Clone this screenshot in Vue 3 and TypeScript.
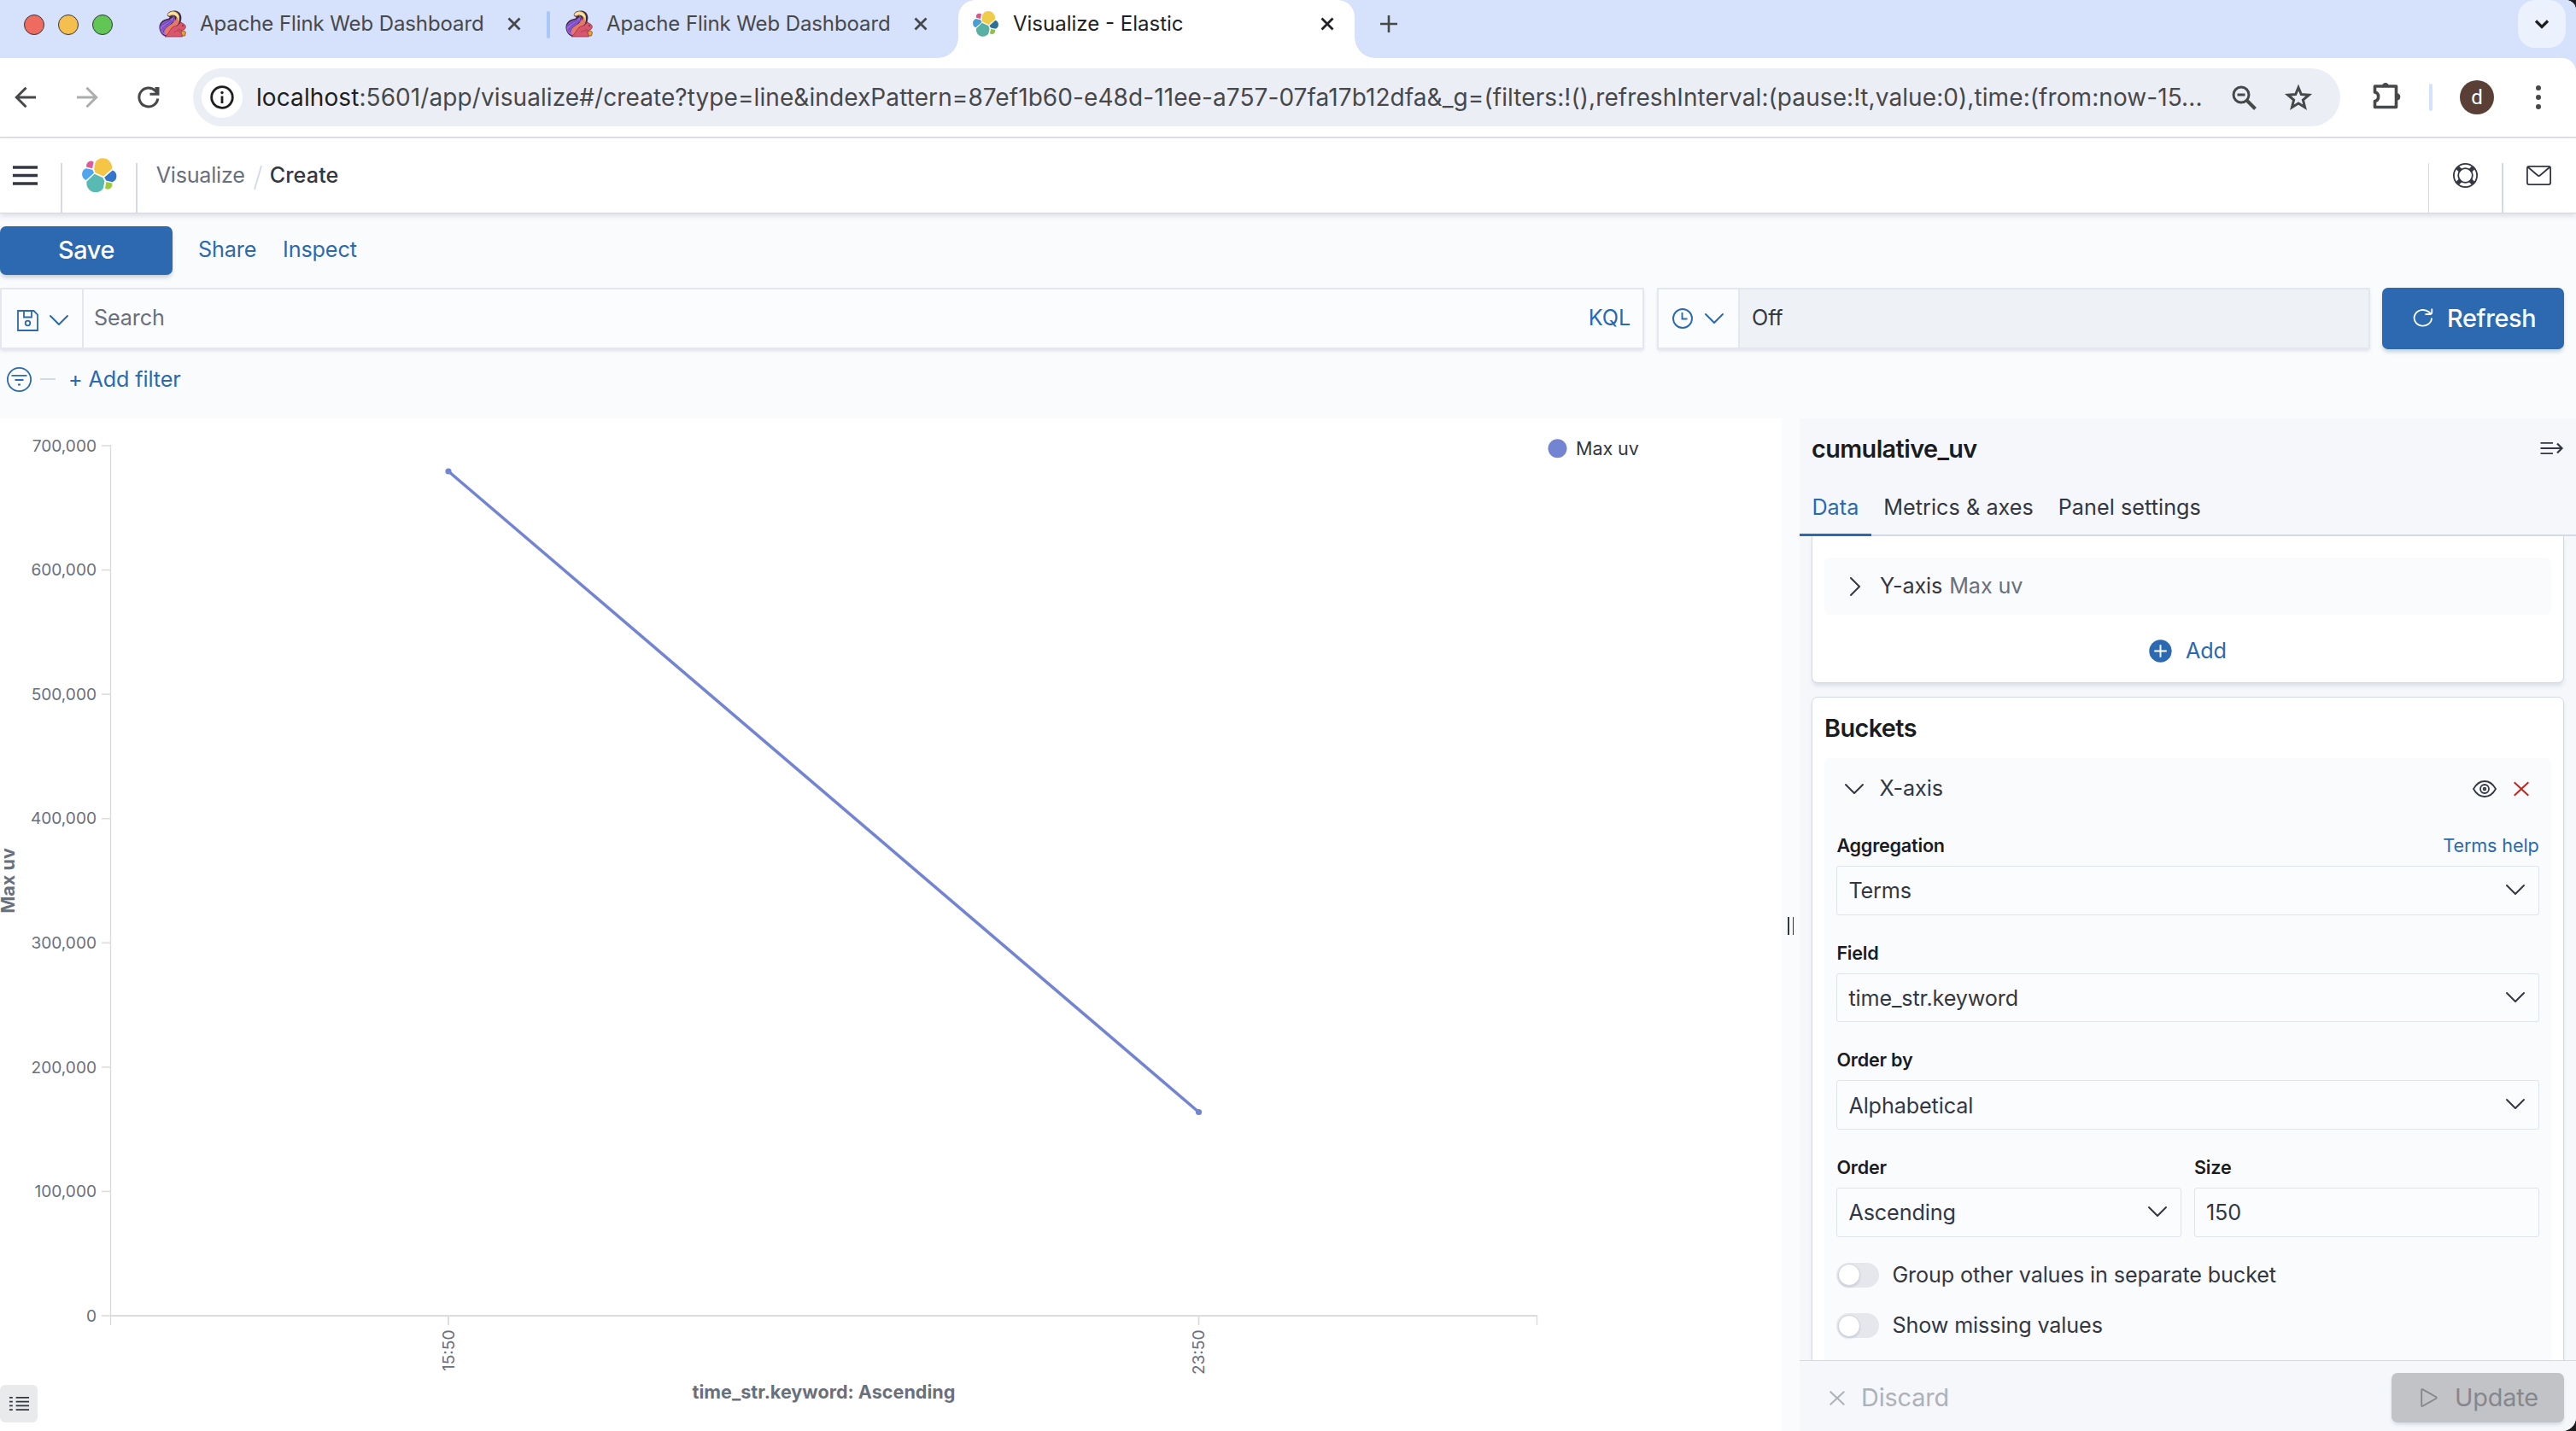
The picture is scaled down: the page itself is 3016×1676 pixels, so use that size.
<script setup lang="ts">
interface BrowserTab {
  title: string
  kind: 'flink' | 'elastic'
}

const flinkTabs: BrowserTab[] = [
  { title: 'Apache Flink Web Dashboard', kind: 'flink' },
  { title: 'Apache Flink Web Dashboard', kind: 'flink' },
]

const logoShapes = [
  'M12.58 13.787l7.002 3.211 7.066-6.213a7.849 7.849 0 0 0 .152-1.557c0-4.287-3.464-7.763-7.736-7.763a7.722 7.722 0 0 0-6.38 3.375L11.508 10.96l1.07 2.827z',
  'M5.333 21.228A8.001 8.001 0 0 0 5.18 22.8c0 4.3 3.473 7.787 7.757 7.787a7.734 7.734 0 0 0 6.406-3.403l1.166-6.102-1.556-2.987-7.03-3.217-6.59 6.35z',
  'M5.288 9.067l4.8 1.137L11.14 4.73A3.812 3.812 0 0 0 8.826 3.95 3.834 3.834 0 0 0 5.004 7.786c0 .441.097.875.284 1.281z',
  'M4.87 10.214a5.294 5.294 0 0 0-3.509 4.996 5.32 5.32 0 0 0 3.398 4.966l6.734-6.104-1.236-2.65-5.387-1.208z',
  'M20.874 27.184a3.807 3.807 0 0 0 2.304.776c2.108 0 3.822-1.72 3.822-3.836 0-.464-.082-.906-.235-1.28l-4.796-1.124-1.095 5.464z',
  'M21.848 20.563l5.28 1.237a5.301 5.301 0 0 0 3.511-5 5.311 5.311 0 0 0-3.401-4.956l-6.905 6.066 1.515 2.653z',
]
const faviconColors = ['#efcd4b', '#5aafa3', '#d7578f', '#4b9fd0', '#8fc04f', '#2f6f97']
const brandColors = ['#f5c646', '#58bab3', '#df5a9a', '#50a5f1', '#9dca3c', '#3474c9']

const axisBottom = 1541
const axisTop = 522
const yTicks = [0, 100000, 200000, 300000, 400000, 500000, 600000, 700000].map((value) => ({
  label: value.toLocaleString('en-US'),
  y: axisBottom - ((axisBottom - axisTop) * value) / 700000,
}))
const xTicks = [
  { label: '15:50', x: 525 },
  { label: '23:50', x: 1403.5 },
]

const selects = [
  { label: 'Aggregation', value: 'Terms', help: 'Terms help' },
  { label: 'Field', value: 'time_str.keyword', help: '' },
  { label: 'Order by', value: 'Alphabetical', help: '' },
]
const toggles = ['Group other values in separate bucket', 'Show missing values']
</script>

<template>
  <div class="window">
    <div class="tabstrip">
      <div class="lights"><i class="red" /><i class="amber" /><i class="green" /></div>
      <template v-for="(tab, i) in flinkTabs" :key="i">
        <div class="tab" :class="'tab-' + i">
          <svg class="flink" viewBox="0 0 32 32">
            <path d="M9 31C4 30 1 26 .5 21C0 16 3 12 8 10.500C11 10 13.500 9 12 7.500C9.500 7.500 9 5 11 3C14 0 20 0 23 2C26 4 27 8 26 12L24 20L20 31Z" fill="#3d2b45" />
            <path d="M2 24C0 18 4 13.500 9 12C15 10.500 17 8 16 6C19 8 20 12 18 16C15 19 13 22 15 29C10 31 4 29 2 24Z" fill="#a565d8" />
            <path d="M7 27C7 21 12 18 16 15C20 12 22 9 20 4C25 7 25 13 22 17C18 20 14 23 14 29C11 30 8 29 7 27Z" fill="#e8785f" />
            <path d="M1.500 19C5 15 10 14 14 11M3 24C6 17 13 16 16 12" stroke="#6e4bc8" stroke-width="1.6" fill="none" />
            <path d="M5 26C6 20 12 18 17 14M16 7C19 11 17 14 14 16" stroke="#3d2b45" stroke-width=".7" fill="none" />
            <path d="M10 6C11 2 16 0 20 2C24 4 25 9 23 13C22 8 19 5 15 6C13 7 12 7 10 6Z" fill="#f5c66a" />
            <path d="M11 5C15 2 20 3 23 8" stroke="#fff0c0" stroke-width="1.4" fill="none" />
            <path d="M7 31C11 29 12 24 16 20C19 18 22 19 24 15.500L26 14L28 15.500C31 16.500 32 19 31 21C30 23 28 23 27 24L27.500 31Z" fill="#d9566c" stroke="#7c2f45" stroke-width=".7" />
            <path d="M18 26C20 23 24 23 25 26M23 22L27 24" stroke="#a03850" stroke-width=".8" fill="none" />
            <path d="M26 25C28 23.500 31 24 31.500 26L30.500 30H28L26.500 28Z" fill="#eda02f" stroke="#7c3f25" stroke-width=".7" />
            <circle cx="28" cy="18" r=".8" fill="#3a1822" />
          </svg>
          <span class="tab-title">{{ tab.title }}</span>
          <svg class="close" viewBox="0 0 16 16"><path d="M1.500 1.500L14.500 14.500M14.500 1.500L1.500 14.500" /></svg>
        </div>
        <div v-if="i === 0" class="tab-sep" />
      </template>
      <div class="tab active">
        <svg class="fav" viewBox="1.3 1.4 29.4 29.3">
          <path v-for="(d, n) in logoShapes" :key="n" :d="d" :fill="faviconColors[n]" />
        </svg>
        <span class="tab-title">Visualize - Elastic</span>
        <svg class="close" viewBox="0 0 16 16"><path d="M1.500 1.500L14.500 14.500M14.500 1.500L1.500 14.500" /></svg>
      </div>
      <svg class="plus" viewBox="0 0 20 20"><path d="M10 0V20M0 10H20" /></svg>
      <div class="tab-menu"><svg viewBox="0 0 18 12"><path d="M2 2.500L9 9.500L16 2.500" /></svg></div>
    </div>

    <div class="toolbar-wrap">
      <div class="toolbar">
        <svg class="nav back" viewBox="0 0 26 26"><path d="M25 13H2.500M13.500 1.800L2.300 13L13.500 24.200" /></svg>
        <svg class="nav fwd" viewBox="0 0 26 26"><path d="M1 13H23.500M12.500 1.800L23.700 13L12.500 24.200" /></svg>
        <svg class="nav reload" viewBox="0 0 26 26">
          <path d="M23.800 14.500A11 11 0 1 1 21 5.500L23.500 8" /><path d="M14.500 10.800V7.800H20.500V1H25.500V10.800Z" class="solid" />
        </svg>
        <div class="omnibox">
          <div class="info">
            <svg viewBox="0 0 28 28"><circle cx="14" cy="14" r="12.300" /><path d="M14 12.500V21" /><circle cx="14" cy="8.500" r="1.700" class="dot" /></svg>
          </div>
          <span class="url"><b>localhost</b>:5601/app/visualize#/create?type=line&amp;indexPattern=87ef1b60-e48d-11ee-a757-07fa17b12dfa&amp;_g=(filters:!(),refreshInterval:(pause:!t,value:0),time:(from:now-15...</span>
          <svg class="zoom" viewBox="0 0 29 29"><circle cx="11" cy="11" r="9" /><path d="M17.500 17.500L27.500 27.500" stroke-width="4" /><path d="M6.500 11H15.500" /></svg>
          <svg class="star" viewBox="0 0 34 32"><path d="M17 4.500L20.300 12.500L29.300 13.200L22.400 19L24.600 27.700L17 23L9.400 27.700L11.600 19L4.700 13.200L13.700 12.500Z" /></svg>
        </div>
        <svg class="puzzle" viewBox="0 0 34 34">
          <path d="M2.500 6H27.500V30.500H2.500V23.500C8 22.500 8 14 2.500 13Z" />
          <path d="M11 5A4.200 4.200 0 0 1 19 5ZM29 14.300A4.200 4.200 0 0 1 29 22.500Z" class="solid" />
        </svg>
        <div class="bar-sep" />
        <div class="avatar">d</div>
        <svg class="dots" viewBox="0 0 8 30"><circle cx="4" cy="4" r="3" /><circle cx="4" cy="15" r="3" /><circle cx="4" cy="26" r="3" /></svg>
      </div>
    </div>

    <header class="app-header">
      <svg class="burger" viewBox="0 0 29 23"><path d="M0 2H29M0 11.500H29M0 21H29" /></svg>
      <div class="vline v1" />
      <svg class="brand" viewBox="1.3 1.4 29.4 29.3">
        <path v-for="(d, n) in logoShapes" :key="n" :d="d" :fill="brandColors[n]" />
      </svg>
      <div class="vline v2" />
      <span class="crumb">Visualize</span>
      <svg class="slash" viewBox="0 0 10 28"><path d="M9 0L1 28" /></svg>
      <span class="crumb current">Create</span>
      <div class="vline v3" />
      <svg class="help" viewBox="0 0 29 29">
        <circle cx="14.500" cy="14.500" r="13.600" /><circle cx="14.500" cy="14.500" r="8.300" />
        <path d="M5.200 5.200L8.900 8.900M23.800 5.200L20.100 8.900M5.200 23.800L8.900 20.100M23.800 23.800L20.100 20.100" stroke-width="5" />
      </svg>
      <div class="vline v4" />
      <svg class="mail" viewBox="0 0 29 23"><rect x=".9" y=".9" width="27.200" height="21.200" rx="2" /><path d="M1.500 1.500L13.200 11.500Q14.500 12.600 15.800 11.500L27.500 1.500" /></svg>
    </header>

    <div class="actions">
      <button class="btn save">Save</button>
      <a class="share">Share</a>
      <a class="inspect">Inspect</a>
    </div>

    <div class="query">
      <div class="search-box">
        <div class="saved">
          <svg class="floppy" viewBox="0 0 25 25"><path d="M1 1H19.500L24 5.500V24H1ZM8 1V8.500H17V1" /><circle cx="12.500" cy="15.500" r="2.800" /></svg>
          <svg class="chev" viewBox="0 0 22 12"><path d="M1 1L11 11L21 1" /></svg>
        </div>
        <span class="placeholder">Search</span>
        <a class="kql">KQL</a>
      </div>
      <div class="time-box">
        <div class="clock-part">
          <svg class="clock" viewBox="0 0 24 24"><circle cx="12" cy="12" r="11" /><path d="M11.500 5V12.500H17.500" /></svg>
          <svg class="chev" viewBox="0 0 22 12"><path d="M1 1L11 11L21 1" /></svg>
        </div>
        <div class="off"><span>Off</span></div>
      </div>
      <button class="btn refresh">
        <svg viewBox="0 0 24 22"><path d="M22 11.500A10.200 9.300 0 1 1 18.500 4.300L21 6.300M14.500 7H20Q22.300 7 22.300 4.500V.5" /></svg>
        <span>Refresh</span>
      </button>
    </div>

    <div class="filters">
      <svg class="filter-icon" viewBox="0 0 29 29"><circle cx="14.500" cy="14.500" r="13.600" /><path d="M5.500 9.800H23.500M9.500 15H19.500M13 20.500H16" /></svg>
      <i class="dash" />
      <a>+ Add filter</a>
    </div>

    <div class="workspace">
      <div class="chart-pane">
        <svg class="chart" viewBox="0 490 2086 1186">
          <g stroke="#dcdcdc" fill="none">
            <path d="M129.500 521V1552" stroke-width="1.400" />
            <path v-for="t in yTicks" :key="t.label" :d="`M119 ${t.y}H130`" stroke-width="1.600" />
            <path d="M129 1541H1800" stroke-width="2" />
            <path d="M1799.500 1541V1552" stroke-width="1.400" />
            <path v-for="t in xTicks" :key="t.label" :d="`M${t.x} 1541V1552`" stroke-width="1.800" />
          </g>
          <g class="tick-label">
            <text v-for="t in yTicks" :key="t.label" x="113" :y="t.y + 6.700" text-anchor="end">{{ t.label }}</text>
            <text v-for="t in xTicks" :key="t.label" :transform="`translate(${t.x + 6.500} 1557.500) rotate(-90)`" text-anchor="end">{{ t.label }}</text>
          </g>
          <text class="axis-title" x="964.500" y="1638" text-anchor="middle">time_str.keyword: Ascending</text>
          <text class="axis-title" transform="translate(17 1031.500) rotate(-90)" text-anchor="middle">Max uv</text>
          <path d="M525 552L1403.500 1302.500" stroke="#7385d2" stroke-width="3.600" fill="none" />
          <circle cx="525" cy="552" r="3.600" fill="#7385d2" /><circle cx="1403.500" cy="1302.500" r="3.600" fill="#7385d2" />
          <circle cx="1823.500" cy="525.300" r="11" fill="#7385d2" />
          <text class="legend-text" x="1845" y="533">Max uv</text>
        </svg>
        <div class="legend-btn">
          <svg viewBox="0 0 24 18"><path d="M0 1.500H4M8 1.500H24M0 6.500H4M8 6.500H24M0 11.500H4M8 11.500H24M0 16.500H4M8 16.500H24" /></svg>
        </div>
      </div>
      <div class="resizer"><i /><i /></div>

      <aside class="sidebar">
        <div class="side-title">
          <h2>cumulative_uv</h2>
          <svg viewBox="0 0 27 16"><path d="M.5 1.800H15M.5 8H25M.5 14.200H15" /><path d="M20 2.500L25.500 8L20 13.500" stroke-width="2.200" /></svg>
        </div>
        <nav class="side-tabs">
          <a class="on">Data</a><a>Metrics &amp; axes</a><a>Panel settings</a>
        </nav>
        <div class="side-scroll">
          <section class="card card-metrics">
            <div class="agg-row">
              <svg class="caret-right" viewBox="0 0 12 22"><path d="M1 1L11 11L1 21" /></svg>
              <span>Y-axis</span><span class="muted">Max uv</span>
            </div>
            <div class="add">
              <svg viewBox="0 0 28 28"><circle cx="14" cy="14" r="13.700" /><path d="M14 6.500V21.500M6.500 14H21.500" /></svg>
              <a>Add</a>
            </div>
          </section>

          <section class="card card-buckets">
            <h3>Buckets</h3>
            <div class="bucket">
              <div class="bucket-head">
                <svg class="chev dark" viewBox="0 0 22 12"><path d="M1 1L11 11L21 1" /></svg>
                <span>X-axis</span>
                <svg class="eye" viewBox="0 0 28 20"><path d="M1 10Q6 1 14 1T27 10Q22 19 14 19T1 10Z" /><circle cx="14" cy="10" r="5" /><circle cx="14" cy="10" r="1.300" /></svg>
                <svg class="remove" viewBox="0 0 18 17"><path d="M.7.7L17.300 16.300M17.300.7L.7 16.300" /></svg>
              </div>
              <div v-for="s in selects" :key="s.label" class="field">
                <div class="label"><b>{{ s.label }}</b><a v-if="s.help">{{ s.help }}</a></div>
                <div class="control"><span>{{ s.value }}</span><svg class="chev dark" viewBox="0 0 22 12"><path d="M1 1L11 11L21 1" /></svg></div>
              </div>
              <div class="pair">
                <div class="field">
                  <div class="label"><b>Order</b></div>
                  <div class="control"><span>Ascending</span><svg class="chev dark" viewBox="0 0 22 12"><path d="M1 1L11 11L21 1" /></svg></div>
                </div>
                <div class="field">
                  <div class="label"><b>Size</b></div>
                  <div class="control"><span>150</span></div>
                </div>
              </div>
              <div v-for="t in toggles" :key="t" class="toggle"><i /><span>{{ t }}</span></div>
            </div>
          </section>
        </div>
        <footer class="side-foot">
          <svg class="cross" viewBox="0 0 18 17"><path d="M.7.7L17.300 16.300M17.300.7L.7 16.300" /></svg>
          <span class="discard">Discard</span>
          <div class="update">
            <svg viewBox="0 0 20 22"><path d="M1.200 2V20Q1.200 21.500 2.600 20.700L18 12Q19.300 11 18 10L2.600 1.300Q1.200.6 1.200 2Z" /></svg>
            <span>Update</span>
          </div>
        </footer>
      </aside>
    </div>
  </div>
</template>

<style>
body { background: #1c1c1e; }
</style>

<style scoped>
* { box-sizing: border-box; }
.window {
  width: 3016px; height: 1676px; overflow: hidden; display: flex; flex-direction: column;
  background: #fafbfd; border-radius: 0 12px 16px 0; color: #343741;
  font-family: Inter, "Liberation Sans", sans-serif; font-size: 25.2px; line-height: 1.2; letter-spacing: -0.005em;
}
svg { display: block; flex: none; fill: none; overflow: visible; }
a { color: #2b69b0; }
span, a, h2, h3, b { white-space: nowrap; }
h2, h3 { margin: 0; }
i { display: block; flex: none; }

.tabstrip { height: 68px; flex: none; display: flex; align-items: flex-start; background: #d6e1fb; letter-spacing: 0; }
.lights { display: flex; gap: 16px; margin: 17px 0 0 28px; }
.lights i { width: 24px; height: 24px; border-radius: 50%; border: 1px solid; }
.red { background: #ed6b5f; border-color: #d75b50; }
.amber { background: #f5bf4f; border-color: #dca93f; }
.green { background: #62c655; border-color: #51ad45; }
.tab { display: flex; align-items: center; height: 56px; color: #47484a; font-size: 24px; flex: none; }
.tab-0 { margin-left: 54px; width: 454px; }
.tab-1 { margin-left: 18px; width: 460px; }
.tab .flink { width: 32px; height: 32px; margin-right: 16px; }
.tab-title { width: 360px; letter-spacing: -0.1px; }
.close { width: 16px; height: 16px; stroke: #47484a; stroke-width: 2.8; }
.tab-sep { width: 4px; height: 32px; margin-top: 13px; border-radius: 2px; background: #a8c7fa; flex: none; }
.tab.active { position: relative; height: 68px; width: 464px; padding: 0 0 12px 17px; background: #fff; color: #202124; border-radius: 20px 20px 0 0; }
.tab.active::before, .tab.active::after { content: ""; position: absolute; bottom: 0; width: 24px; height: 24px; }
.tab.active::before { left: -24px; background: radial-gradient(circle at 0 0, transparent 23.5px, #fff 24px); }
.tab.active::after { right: -24px; background: radial-gradient(circle at 100% 0, transparent 23.5px, #fff 24px); }
.fav { width: 30px; height: 30px; margin-right: 17px; }
.active .close { stroke: #202124; }
.active .tab-title { letter-spacing: 0; }
.plus { width: 20px; height: 20px; margin: 18px 0 0 30px; stroke: #47484a; stroke-width: 2.6; }
.tab-menu { width: 56px; height: 56px; margin: 0 12px 0 auto; border-radius: 20px; background: #ebf2fd; display: flex; align-items: center; justify-content: center; }
.tab-menu svg { width: 18px; height: 12px; stroke: #1f1f1f; stroke-width: 3.2; }

.toolbar-wrap { background: #d6e1fb; flex: none; }
.toolbar { height: 94px; padding-bottom: 0; border-bottom: 2px solid #e0e1e3; background: #fff; border-radius: 0 16px 0 0; display: flex; align-items: center; }
.nav { width: 26px; height: 26px; stroke: #47484a; stroke-width: 3; }
.back { margin-left: 17px; }
.fwd { margin-left: 46px; stroke: #acadae; }
.reload { margin-left: 46px; }
.solid { fill: #47484a; stroke: none; }
.omnibox { width: 2514px; height: 68px; margin-left: 39px; border-radius: 34px; background: #eceef6; display: flex; align-items: center; letter-spacing: 0; }
.info { width: 48px; height: 48px; margin-left: 10px; border-radius: 50%; background: #fff; display: flex; align-items: center; justify-content: center; }
.info svg { width: 28px; height: 28px; stroke: #1f1f1f; stroke-width: 2.8; }
.info .dot { fill: #1f1f1f; stroke: none; }
.url { margin: 1px 0 0 16px; width: 2313px; font-size: 28px; letter-spacing: 0.085px; color: #47484a; }
.url b { font-weight: 400; color: #1f1f1f; }
.zoom { width: 29px; height: 29px; stroke: #47484a; stroke-width: 3; }
.star { width: 34px; height: 32px; margin-left: 32px; stroke: #47484a; stroke-width: 3; }
.puzzle { width: 34px; height: 34px; margin: -4px 0 0 38px; stroke: #47484a; stroke-width: 3.6; stroke-linejoin: round; }
.bar-sep { width: 4px; height: 32px; border-radius: 2px; background: #d3e3fd; margin-left: 32px; }
.avatar { width: 40px; height: 40px; margin-left: 32px; border-radius: 50%; background: #5a3f37; color: #fff; font: 24px/40px Roboto, sans-serif; text-align: center; }
.dots { width: 8px; height: 30px; margin-left: 48px; fill: #47484a; }

.app-header { position: relative; height: 88px; flex: none; background: #fff; border-bottom: 1.6px solid #d3dae6; box-shadow: 0 3px 6px rgba(152, 162, 179, .32); display: flex; align-items: center; }
.burger { width: 29px; height: 23px; margin-left: 15px; stroke: #343741; stroke-width: 3.6; }
.vline { width: 1.6px; height: 58px; align-self: flex-end; background: #d3dae6; flex: none; }
.v1 { margin-left: 27px; }
.brand { width: 40.500px; height: 40.500px; margin-left: 23px; }
.v2 { margin-left: 23px; }
.crumb { width: 116px; margin-left: 22px; color: #69707d; letter-spacing: -0.25px; }
.crumb.current { margin-left: 9px; color: #343741; font-weight: 500; letter-spacing: 0.1px; }
.slash { width: 10px; height: 28px; margin-left: -2px; margin-top: 4px; stroke: #d3dae6; stroke-width: 1.8; }
.v3 { margin-left: auto; }
.help { width: 29px; height: 29px; margin-left: 28px; stroke: #343741; stroke-width: 1.8; }
.v4 { margin-left: 28px; }
.mail { width: 29px; height: 23px; margin: 0 29px 0 27px; stroke: #343741; stroke-width: 1.8; }

.actions { height: 87px; flex: none; padding-top: 15px; display: flex; align-items: flex-start; }
.btn { border: 0; padding: 0; color: #fff; background: #2c69b0; border-radius: 7px; box-shadow: 0 4px 5px -1px rgba(54, 97, 126, .28); font: 500 28.8px/1.2 Inter, sans-serif; letter-spacing: -0.3px; flex: none; }
.save { width: 202px; height: 57px; }
.share { margin: 12px 0 0 30px; width: 99px; }
.inspect { margin-top: 12px; }

.query { height: 72px; flex: none; display: flex; }
.search-box, .time-box { display: flex; align-items: center; border: 2px solid #e4e7f0; background: #fbfcfd; box-shadow: 0 3px 4px -1px rgba(152, 162, 179, .3); }
.search-box { width: 1925px; }
.saved { width: 96px; height: 100%; border-right: 2px solid #e4e7ee; display: flex; align-items: center; padding: 4px 0 0 18px; gap: 13px; }
.floppy { width: 25px; height: 25px; stroke: #2b69b0; stroke-width: 1.8; }
.chev { width: 22px; height: 12px; stroke: #2b69b0; stroke-width: 2; stroke-linecap: round; stroke-linejoin: round; }
.chev.dark { stroke: #343741; }
.placeholder { margin: -1px 0 0 12px; color: #69707d; }
.kql { margin: -1px 14px 0 auto; }
.time-box { width: 835px; margin-left: 15px; }
.clock-part { width: 95px; height: 100%; border-right: 2px solid #e4e7f0; display: flex; align-items: center; gap: 14px; padding-left: 16px; }
.clock { width: 24px; height: 24px; stroke: #2b69b0; stroke-width: 1.9; }
.off { flex: 1; height: 100%; background: #eef2f7; display: flex; align-items: center; padding: 0 0 1px 14px; }
.refresh { width: 213px; margin-left: 14px; display: flex; align-items: center; padding-left: 36px; gap: 16px; }
.refresh svg { width: 24px; height: 22px; stroke: #fff; stroke-width: 1.8; margin-top: -3px; }

.filters { height: 81px; flex: none; display: flex; align-items: flex-start; padding: 20px 0 0 8px; }
.filter-icon { width: 29px; height: 29px; margin-top: 1px; stroke: #2b69b0; stroke-width: 1.8; }
.dash { width: 18px; height: 2px; margin: 14px 15px 0 10px; background: #d3dae6; }

.workspace { height: 1186px; display: flex; }
.chart-pane { position: relative; width: 2086px; height: 1186px; background: #fff; flex: none; }
.chart { width: 2086px; height: 1186px; }
.tick-label { fill: #69707d; font-size: 19.1px; letter-spacing: 0; }
.axis-title { fill: #69707d; font-size: 21.6px; font-weight: 700; letter-spacing: 0; }
.legend-text { fill: #343741; font-size: 21.6px; }
.legend-btn { position: absolute; left: 0; bottom: 10px; width: 44px; height: 44px; border-radius: 6px; background: #e9eaec; display: flex; align-items: center; justify-content: center; }
.legend-btn svg { width: 23px; height: 18px; stroke: #343741; stroke-width: 1.9; }
.resizer { width: 21px; display: flex; gap: 4px; padding-top: 584px; justify-content: center; flex: none; }
.resizer i { width: 1.8px; height: 21px; background: #343741; }

.sidebar { width: 909px; background: #f5f7fb; display: flex; flex-direction: column; flex: none; }
.side-title { height: 70px; display: flex; align-items: center; padding: 2px 15px 0 14px; color: #1a1c21; flex: none; }
h2 { font-size: 28.8px; font-weight: 600; letter-spacing: -0.02em; }
.side-title svg { width: 27px; height: 16px; margin: -2px 0 0 auto; stroke: #343741; stroke-width: 1.8; }
.side-tabs { height: 68px; display: flex; border-bottom: 2px solid #d3dae6; flex: none; letter-spacing: 0.05px; }
.side-tabs a { height: 68px; padding: 0 14.4px; display: flex; align-items: center; color: #343741; }
.side-tabs .on { color: #2b69b0; border-bottom: 3.6px solid #2b69b0; padding-top: 3.6px; }
.side-scroll { height: 965px; overflow: hidden; padding: 0 14px 0 14px; flex: none; }
.card { background: #fff; border: 1.6px solid #d3dae6; border-radius: 7px; box-shadow: 0 4px 5px -1px rgba(152, 162, 179, .3); padding: 0 14px; }
.card-metrics { height: 172px; border-top: 0; border-radius: 0 0 7px 7px; padding-top: 25px; }
.agg-row { height: 67px; display: flex; align-items: center; background: #fafbfd; border-radius: 7px; padding-left: 30px; }
.caret-right { width: 12px; height: 22px; margin-right: 23px; stroke: #343741; stroke-width: 2; stroke-linecap: round; }
.muted { color: #69707d; margin-left: 8px; }
.add { height: 78px; padding-top: 6px; display: flex; align-items: center; justify-content: center; gap: 16px; }
.add svg { width: 27px; height: 27px; fill: #2b69b0; }
.add path { stroke: #fff; stroke-width: 2; }
.card-buckets { margin-top: 15.5px; height: 900px; }
h3 { height: 71px; line-height: 71px; font-size: 28.8px; font-weight: 600; color: #1a1c21; letter-spacing: -0.02em; }
.bucket { height: 840px; background: #fafbfd; border-radius: 7px; padding: 1px 14.4px 0; }
.bucket-head { height: 70px; margin-bottom: 18px; display: flex; align-items: center; }
.bucket-head .chev { margin: 0 18px 0 10px; }
.eye { width: 28px; height: 20px; margin-left: auto; stroke: #343741; stroke-width: 1.8; }
.remove { width: 18px; height: 18px; margin: 0 12px 0 20px; stroke: #bd271e; stroke-width: 2; }
.field { margin-bottom: 30.2px; }
.label { height: 28px; margin-bottom: 9.8px; padding-top: 1px; display: flex; align-items: center; justify-content: space-between; font-size: 21.6px; }
.label b { font-weight: 600; color: #1a1c21; letter-spacing: -0.01em; }
.control { height: 57.6px; border: 1.8px solid #dfe3ec; border-radius: 3px; background: #fbfcfd; display: flex; align-items: center; justify-content: space-between; padding: 1px 16px 0 13px; }
.pair { display: flex; gap: 15px; }
.pair .field { flex: 1; }
.control .chev { margin-top: -3px; }
.toggle { height: 28.800px; margin-bottom: 30.600px; display: flex; align-items: center; gap: 15px; }
.toggle i { width: 50px; height: 28.800px; border-radius: 15px; background: #e6e7ed; padding: 1.500px; }
.toggle i::before { content: ""; display: block; width: 24px; height: 24px; border-radius: 50%; background: #fff; border: 1px solid #d0d3da; box-shadow: 0 2px 2px rgba(152, 162, 179, .3); }

.side-foot { height: 83px; border-top: 1.6px solid #d3dae6; display: flex; align-items: center; padding: 4px 14px 0 35px; font-size: 28.8px; color: #aeb1b7; }
.cross { width: 18px; height: 17px; stroke: #aeb1b7; stroke-width: 2; }
.discard { margin-left: 19px; }
.update { margin-left: auto; width: 202px; height: 58px; border-radius: 7px; background: #c2c3c6; color: #85878c; display: flex; align-items: center; gap: 20px; padding-left: 34px; box-shadow: 0 3px 4px -1px rgba(152, 162, 179, .4); }
.update svg { width: 20px; height: 22px; stroke: #85878c; stroke-width: 1.9; }
</style>
